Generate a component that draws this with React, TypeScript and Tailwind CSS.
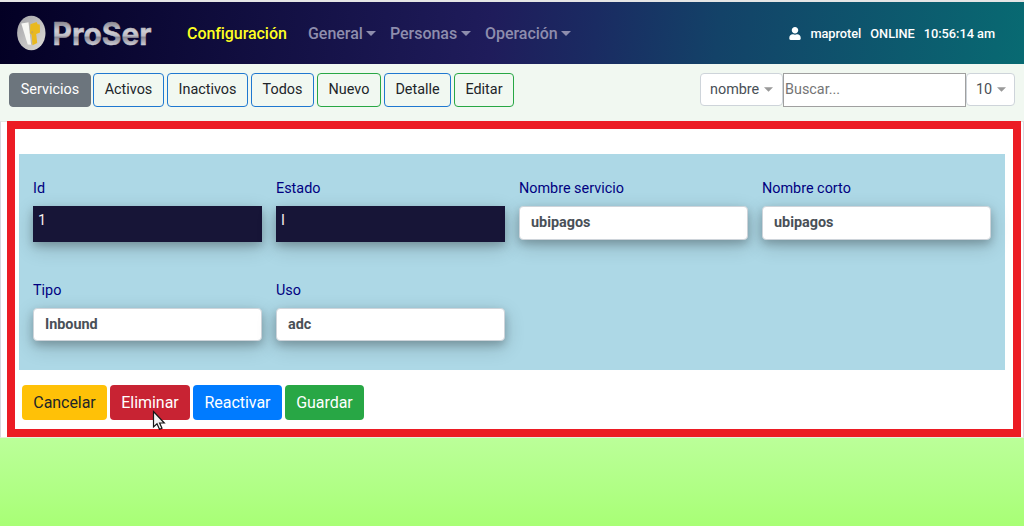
import { FaUser } from "react-icons/fa";

function Caret({ className }: { className: string }) {
  return (
    <svg className={className} width="10" height="5" viewBox="0 0 10 5" fill="currentColor">
      <path d="M0 0h10L5 5z" />
    </svg>
  );
}

function Logo() {
  return (
    <svg className="block h-[62px] w-[160px] shrink-0" viewBox="0 0 160 62">
      <defs>
        <linearGradient id="metal" gradientUnits="userSpaceOnUse" x1="0" y1="19" x2="0" y2="44">
          <stop offset="0" stopColor="#817f89" />
          <stop offset="0.4" stopColor="#cfced4" />
          <stop offset="0.58" stopColor="#bdbcc4" />
          <stop offset="0.66" stopColor="#8d8b97" />
          <stop offset="1" stopColor="#d4d3da" />
        </linearGradient>
        <linearGradient id="disc" x1="0" y1="0" x2="1" y2="1">
          <stop offset="0" stopColor="#a3a3a8" />
          <stop offset="1" stopColor="#dfddd8" />
        </linearGradient>
      </defs>
      <ellipse cx="31.3" cy="31" rx="14.2" ry="17.2" fill="url(#disc)" />
      <path d="M21.3 21.5l7.5-1.3 3.2 22.6-4.3-.2z" fill="#f7f7f4" />
      <path d="M28.5 20.2l1.6.3 2.2 22.2-1.2.1z" fill="#b9b6af" />
      <path d="M30.4 22.3l6.2-2.3 1 2.2 2.2.4.2 8-3.8 1.4 1 9-4.7 2.3-.9-10.6-1.7-1.4z" fill="#e9b91f" />
      <path d="M31 29.5l2-.6.3 2-2 .6z" fill="#c9a84d" />
      <text x="52.5" y="43" fill="url(#metal)" stroke="url(#metal)" strokeWidth="0.5" strokeLinejoin="round" textLength="99" lengthAdjust="spacingAndGlyphs" className="font-['Inter'] text-[31px] font-bold">ProSer</text>
    </svg>
  );
}

function NavItem({ label, width }: { label: string; width: string }) {
  return (
    <div className={`flex shrink-0 items-center ${width}`}>
      <span className="tracking-[-0.03px]">{label}</span>
      <Caret className="mb-[2px] ml-[3.5px] shrink-0" />
    </div>
  );
}

const tabs = [
  { label: "Servicios", style: "w-[82px] mr-[2px] border-[#6c757d] bg-[#6c757d] text-white" },
  { label: "Activos", style: "w-[71px] mr-[3px] border-[#1f78d0]" },
  { label: "Inactivos", style: "w-[81px] mr-[3px] border-[#1f78d0]" },
  { label: "Todos", style: "w-[63px] mr-[3px] border-[#1f78d0]" },
  { label: "Nuevo", style: "w-[64px] mr-[3px] border-[#28a745]" },
  { label: "Detalle", style: "w-[67px] mr-[3px] border-[#1f78d0]" },
  { label: "Editar", style: "w-[60px] border-[#28a745]" },
];

const actions = [
  { label: "Cancelar", style: "w-[85px] bg-[#ffc107] text-[#212529]" },
  { label: "Eliminar", style: "w-[80px] bg-[#c82333] text-white" },
  { label: "Reactivar", style: "w-[89px] bg-[#007bff] text-white" },
  { label: "Guardar", style: "w-[79px] bg-[#28a745] text-white" },
];

const fields = [
  { label: "Id", value: "1", locked: true },
  { label: "Estado", value: "I", locked: true },
  { label: "Nombre servicio", value: "ubipagos", height: "h-[34px]" },
  { label: "Nombre corto", value: "ubipagos", height: "h-[34px]" },
  { label: "Tipo", value: "Inbound", height: "h-[33px]" },
  { label: "Uso", value: "adc", height: "h-[33px]" },
];

export default function App() {
  return (
    <div className="h-[526px] w-[1024px] overflow-hidden bg-[#f1f8f1] font-['Roboto',sans-serif] text-[14.4px] text-[#212529]">
      <div className="h-[2px] bg-[#e5e5e5]" />
      <nav className="flex h-[62px] items-center bg-[linear-gradient(96deg,#030024,#1f1c5b_48%,#1a2b62_58%,#134268_70%,#086a72)] text-[16px] font-medium text-[#8e8dad]">
        <Logo />
        <span className="ml-[27px] mt-[2px] w-[121px] shrink-0 tracking-[-0.06px] text-[#ffff20]">Configuración</span>
        <div className="mt-[2px] flex">
          <NavItem label="General" width="w-[82px]" />
          <NavItem label="Personas" width="w-[95px]" />
          <NavItem label="Operación" width="w-[90px]" />
        </div>
        <div className="ml-auto mr-[29px] mt-[2px] flex items-center text-[12.8px] tracking-[-0.04px] text-white">
          <FaUser className="mb-[2px] mr-[9px] h-[13px] w-[12px]" />
          <span className="mr-[9px]">maprotel</span>
          <span className="mr-[9px]">ONLINE</span>
          <span>10:56:14 am</span>
        </div>
      </nav>

      <div className="flex h-[57px] items-start pl-[9px] pt-[9px]">
        {tabs.map((t) => (
          <button key={t.label} className={`flex h-[34px] shrink-0 items-center justify-center rounded-[4px] border pb-[1px] ${t.style}`}>
            {t.label}
          </button>
        ))}
        <div className="ml-auto mr-[9px] flex items-start">
          <div className="flex h-[33px] w-[83px] items-center rounded-[4px] border border-[#ced4da] bg-white pl-[9px] text-[#495057]">
            nombre <Caret className="ml-[5px] h-[5px] w-[9px] text-[#999]" />
          </div>
          <input placeholder="Buscar..." className="h-[34px] w-[183px] border border-[#a0a0a0] bg-white pb-[2px] pl-[1px] outline-none placeholder:text-[#757575]" />
          <div className="flex h-[33px] w-[49px] items-center rounded-[4px] border border-[#ced4da] bg-white pl-[9px] text-[#495057]">
            10 <Caret className="ml-[5px] h-[5px] w-[9px] text-[#999]" />
          </div>
        </div>
      </div>

      <main className="h-[317px] border border-t-[#e2e8e2] border-r-[#d9d9df] border-b-[#e6eedf] border-l-[#d9d9df] bg-white pl-[6px]">
        <section className="-mt-px h-[316px] w-[1014px] border-[8px] border-[#ec1c24] bg-white pl-[4px] pt-[25px]">
          <div className="grid h-[216px] w-[986px] grid-cols-4 grid-rows-[102px_102px] content-start gap-x-[14px] bg-[#add8e6] px-[14px] pt-[23px]">
            {fields.map((f) => (
              <label key={f.label} className="block">
                <span className="block h-[29px] pt-px leading-[22px] text-[#000080]">{f.label}</span>
                {f.locked ? (
                  <div className="h-[36px] bg-[#171537] pl-[5px] pt-[4px] leading-[22px] text-[#f5eeee] shadow-[0_4px_8px_rgba(0,0,0,0.2),0_6px_20px_rgba(0,0,0,0.19)]">{f.value}</div>
                ) : (
                  <div className={`rounded-[4px] border border-[#ced4da] bg-white pl-[11px] pt-[5px] font-bold leading-[21px] text-[#495057] shadow-[0_4px_8px_rgba(0,0,0,0.2),0_6px_20px_rgba(0,0,0,0.19)] ${f.height}`}>{f.value}</div>
                )}
              </label>
            ))}
          </div>
          <div className="relative flex gap-[3px] pl-[3px] pt-[15px] text-[16px]">
            {actions.map((a) => (
              <button key={a.label} className={`flex h-[35px] items-center justify-center rounded-[4px] tracking-[-0.05px] ${a.style}`}>
                {a.label}
              </button>
            ))}
            <svg className="absolute left-[133px] top-[40px]" width="14" height="20" viewBox="0 0 14 20">
              <path d="M1.5 1.5v15.5l3.5-3.2 2.5 5.5 2.5-1.1-2.4-5.2h4.7z" fill="#f4f4f4" stroke="#151515" strokeWidth="1.2" />
            </svg>
          </div>
        </section>
      </main>
      <div className="h-[88px] bg-linear-to-b from-[#bbff99] to-[#a8ff75]" />
    </div>
  );
}
